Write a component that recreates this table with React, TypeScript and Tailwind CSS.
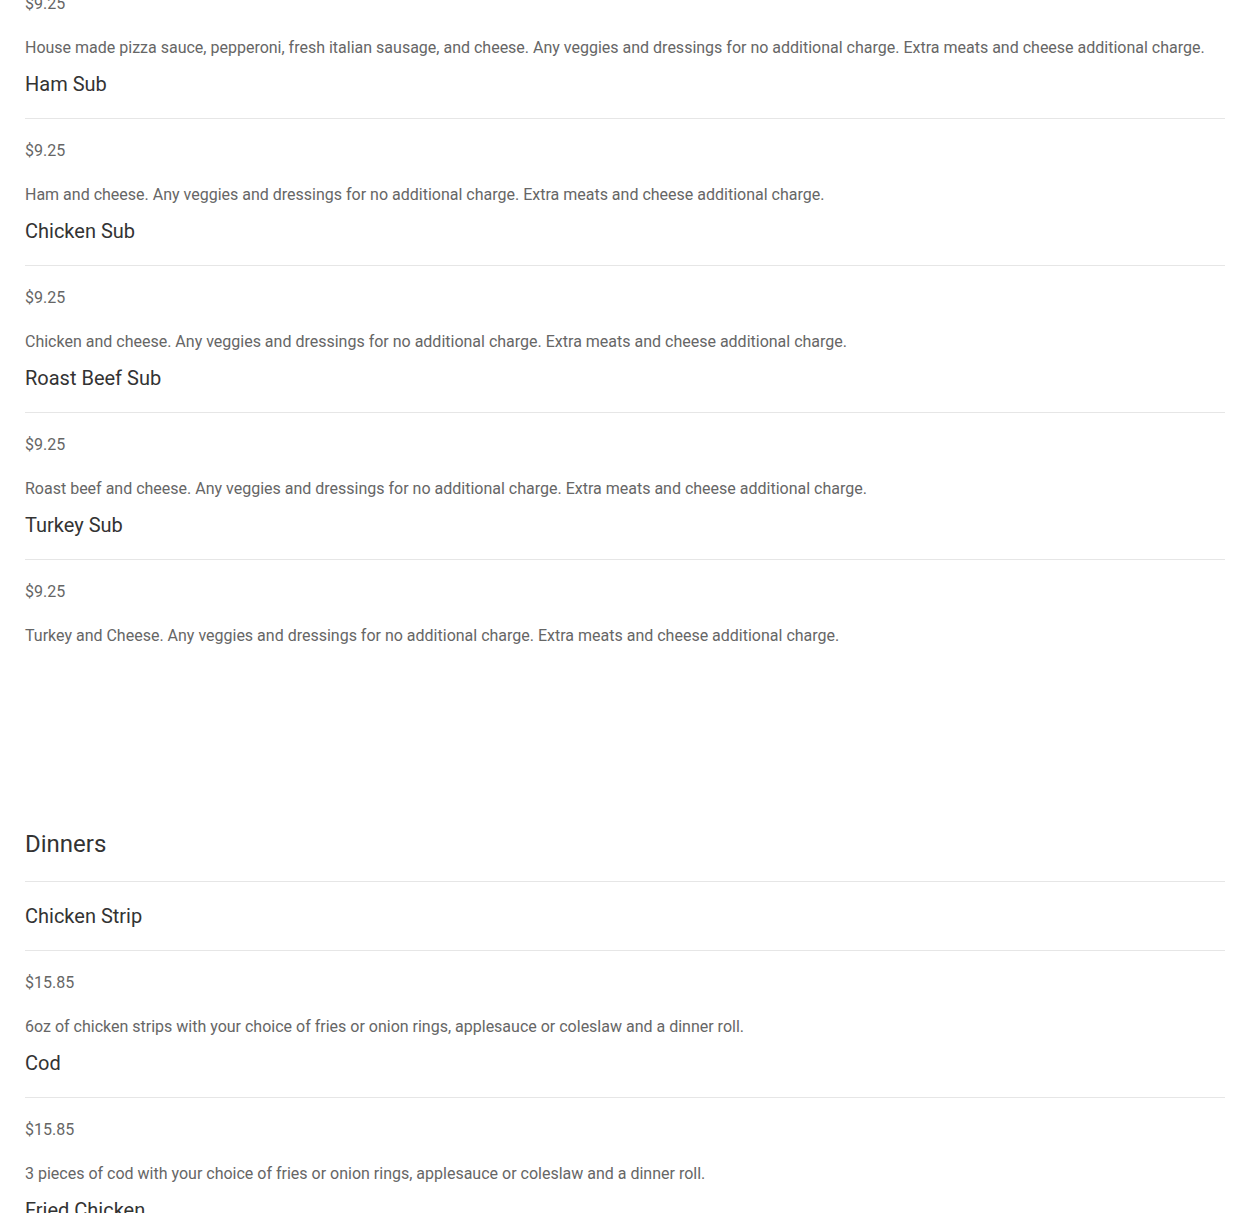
type Item = { name: string; price: string; description: string };

const subs: Item[] = [
  {
    name: "Ham Sub",
    price: "$9.25",
    description:
      "Ham and cheese. Any veggies and dressings for no additional charge. Extra meats and cheese additional charge.",
  },
  {
    name: "Chicken Sub",
    price: "$9.25",
    description:
      "Chicken and cheese. Any veggies and dressings for no additional charge. Extra meats and cheese additional charge.",
  },
  {
    name: "Roast Beef Sub",
    price: "$9.25",
    description:
      "Roast beef and cheese. Any veggies and dressings for no additional charge. Extra meats and cheese additional charge.",
  },
  {
    name: "Turkey Sub",
    price: "$9.25",
    description:
      "Turkey and Cheese. Any veggies and dressings for no additional charge. Extra meats and cheese additional charge.",
  },
];

const dinners: Item[] = [
  {
    name: "Chicken Strip",
    price: "$15.85",
    description:
      "6oz of chicken strips with your choice of fries or onion rings, applesauce or coleslaw and a dinner roll.",
  },
  {
    name: "Cod",
    price: "$15.85",
    description:
      "3 pieces of cod with your choice of fries or onion rings, applesauce or coleslaw and a dinner roll.",
  },
  {
    name: "Fried Chicken",
    price: "$15.85",
    description:
      "Fried chicken with your choice of fries or onion rings, applesauce or coleslaw and a dinner roll.",
  },
];

function PriceBlock({ price, description }: { price: string; description: string }) {
  return (
    <>
      <p className="text-base leading-6 text-[#666666]">{price}</p>
      <p className="mt-5 text-base leading-6 text-[#666666]">{description}</p>
    </>
  );
}

function MenuItem({ item }: { item: Item }) {
  return (
    <div className="mt-[10px]">
      <h3 className="border-b border-[#e6e6e6] pb-5 text-xl leading-7 text-[#333333]">
        {item.name}
      </h3>
      <div className="mt-5">
        <PriceBlock price={item.price} description={item.description} />
      </div>
    </div>
  );
}

export default function App() {
  return (
    <div
      className="min-h-screen overflow-hidden bg-white px-[25px]"
      style={{ fontFamily: "Roboto, 'Noto Sans', sans-serif" }}
    >
      <div className="-mt-[8px]">
        <PriceBlock
          price="$9.25"
          description="House made pizza sauce, pepperoni, fresh italian sausage, and cheese. Any veggies and dressings for no additional charge. Extra meats and cheese additional charge."
        />
        {subs.map((item) => (
          <MenuItem key={item.name} item={item} />
        ))}
      </div>

      <section className="mt-[180px]">
        <h2 className="border-b border-[#e6e6e6] pb-[21px] text-2xl leading-8 text-[#333333]">
          Dinners
        </h2>
        <div className="-mt-[10px] pt-[20px]">
          {dinners.map((item) => (
            <MenuItem key={item.name} item={item} />
          ))}
        </div>
      </section>
    </div>
  );
}
